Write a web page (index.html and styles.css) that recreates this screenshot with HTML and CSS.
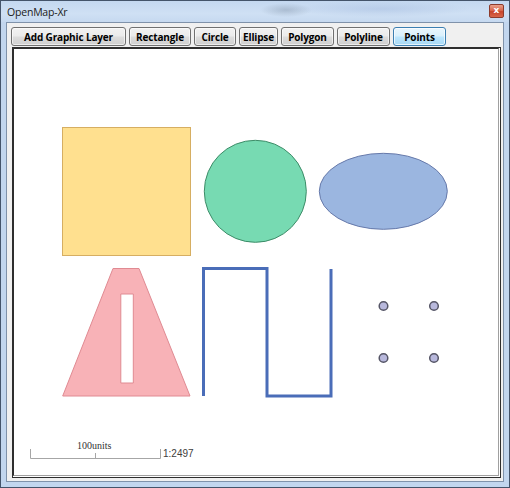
FILE: index.html
```html
<!DOCTYPE html>
<html>
<head>
<meta charset="utf-8">
<title>OpenMap-Xr</title>
<link rel="stylesheet" href="styles.css">
</head>
<body>
<div class="window">
  <div class="titlebar">
    <span class="title">OpenMap-Xr</span>
    <span class="close"><span class="close-x">x</span></span>
  </div>
  <div class="client">
    <div class="toolbar">
      <button class="btn w-add">Add Graphic Layer</button>
      <button class="btn w-rect">Rectangle</button>
      <button class="btn w-circle">Circle</button>
      <button class="btn w-ellipse">Ellipse</button>
      <button class="btn w-std">Polygon</button>
      <button class="btn w-std">Polyline</button>
      <button class="btn w-std btn-focus">Points</button>
    </div>
    <div class="map">
      <div class="map-inner">
        <svg class="canvas" width="484" height="426" viewBox="14 49 484 426" xmlns="http://www.w3.org/2000/svg">
          <rect x="62.5" y="127.5" width="128" height="128" fill="#ffe08f" stroke="#d6ae62" stroke-width="1"/>
          <circle cx="255.3" cy="191.3" r="51" fill="#77dab2" stroke="#3d8c68" stroke-width="1"/>
          <ellipse cx="383.3" cy="191.3" rx="64" ry="38" fill="#9bb6e0" stroke="#6679aa" stroke-width="1"/>
          <path d="M113 268.5 L139 268.5 L190 396 L62.7 396 Z M120.8 294 L120.8 383 L133.3 383 L133.3 294 Z" fill="#f8b2b7" fill-rule="evenodd" stroke="#e08a92" stroke-width="1"/>
          <polyline points="203.5,396 203.5,268.5 267,268.5 267,396 331,396 331,269" fill="none" stroke="#4a6db8" stroke-width="3"/>
          <g fill="#b8b8dc" stroke="#555566" stroke-width="1.5">
            <circle cx="383.5" cy="306" r="4.3"/>
            <circle cx="434" cy="306" r="4.3"/>
            <circle cx="383.5" cy="358" r="4.3"/>
            <circle cx="434" cy="358" r="4.3"/>
          </g>
          <g stroke="#a6a6a6" stroke-width="1" fill="none">
            <path d="M30.5 449 L30.5 458.5 L160.5 458.5 L160.5 449"/>
            <path d="M95.5 453 L95.5 458.5"/>
          </g>
          <text x="77" y="449" class="scale-label">100units</text>
          <text x="163" y="457" class="scale-ratio">1:2497</text>
        </svg>
      </div>
    </div>
  </div>
</div>
</body>
</html>
```

FILE: styles.css
```css
html, body {
  margin: 0;
  padding: 0;
  background: #ffffff;
}

.window {
  width: 510px;
  height: 488px;
  box-sizing: border-box;
  border: 1px solid #44546a;
  background: #c2d6ee;
  padding: 0 5px 5px 5px;
  display: flex;
  flex-direction: column;
}

.titlebar {
  height: 21px;
  flex: none;
  display: flex;
  justify-content: space-between;
  align-items: flex-start;
  margin: 0 -5px;
  padding: 0 5px;
  background:
    radial-gradient(ellipse 26px 7px at 285px 9px, rgba(130,148,170,0.45), rgba(130,148,170,0) 100%),
    radial-gradient(ellipse 90px 8px at 380px 8px, rgba(150,175,215,0.35), rgba(150,175,215,0) 100%),
    linear-gradient(180deg, #c4d8f0 0%, #cfe0f4 60%, #c6d9f0 100%);
}

.title {
  font-family: "Open Sans", "Noto Sans", sans-serif;
  font-size: 10.5px;
  color: #202020;
  margin-top: 4px;
  padding-left: 1px;
  letter-spacing: -0.2px;
}

.close {
  width: 15px;
  height: 14px;
  margin-top: 3px;
  box-sizing: border-box;
  border: 1px solid #8c3b2c;
  border-radius: 2px;
  background: linear-gradient(180deg, #e9a08a 0%, #d9694f 45%, #c8442a 55%, #d8664a 100%);
  display: flex;
  align-items: center;
  justify-content: center;
}

.close-x {
  font-family: "DejaVu Sans", sans-serif;
  font-weight: bold;
  font-size: 9px;
  line-height: 9px;
  color: #ffffff;
  margin-top: -1px;
}

.client {
  flex: 1;
  border: 1px solid #7f92aa;
  background: #f0f0f0;
  display: flex;
  flex-direction: column;
  min-height: 0;
}

.toolbar {
  display: flex;
  gap: 3px;
  padding: 4px 0 0 4px;
  height: 19px;
  flex: none;
}

.btn {
  height: 19px;
  box-sizing: border-box;
  margin: 0;
  padding: 0;
  border: 1px solid #707070;
  border-radius: 3px;
  background: linear-gradient(180deg, #f2f2f2 0%, #ebebeb 48%, #dddddd 52%, #cfcfcf 100%);
  box-shadow: inset 0 0 0 1px rgba(255,255,255,0.6);
  font-family: "Open Sans", "Noto Sans", sans-serif;
  font-weight: bold;
  font-size: 10px;
  letter-spacing: -0.15px;
  line-height: 16px;
  color: #000000;
  text-align: center;
  white-space: nowrap;
}

.btn-focus {
  border-color: #3c7fb1;
  background: linear-gradient(180deg, #eaf6fd 0%, #d9f0fc 48%, #bee6fd 52%, #a7d9f5 100%);
  box-shadow: inset 0 0 0 1px rgba(255,255,255,0.7);
}

.w-add { width: 115px; }
.w-rect { width: 62px; }
.w-circle { width: 42px; }
.w-ellipse { width: 39px; }
.w-std { width: 53px; }

.map {
  flex: 1;
  margin: 1px 2px 3px 5px;
  border: 1px solid #2e2e2e;
  padding: 0 1px 1px 0;
  background: #ffffff;
  display: flex;
  min-height: 0;
}

.map-inner {
  flex: 1;
  border-top: 1px solid #2e2e2e;
  border-left: 1px solid #2e2e2e;
  border-right: 1px solid #a0a0a0;
  border-bottom: 1px solid #a0a0a0;
  background: #ffffff;
  overflow: hidden;
}

.canvas {
  display: block;
}

.scale-label {
  font-family: "Liberation Serif", serif;
  font-size: 10px;
  fill: #333333;
}

.scale-ratio {
  font-family: "Liberation Sans", sans-serif;
  font-size: 10px;
  fill: #404040;
}
```
